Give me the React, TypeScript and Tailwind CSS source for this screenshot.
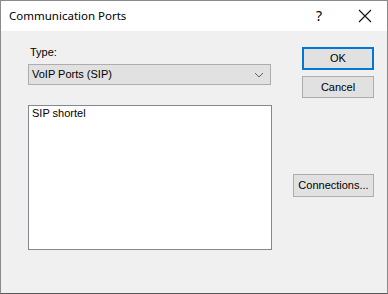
export default function App() {
  return (
    <div className="w-[388px] h-[294px] bg-[#f0f0f0] border border-[#8a8a8a] border-b-[#5a5a5a] flex flex-col overflow-hidden">
      {/* title bar */}
      <div className="h-[30px] bg-white flex items-center shrink-0">
        <span className="ml-[8px] text-[11.5px] text-black font-['Noto_Sans',sans-serif] leading-none">
          Communication Ports
        </span>
        <span className="ml-auto mr-[35px] text-[14px] text-black font-['Noto_Sans',sans-serif] leading-none">?</span>
        <svg className="mr-[14px]" width="16" height="16" viewBox="0 0 16 16">
          <path d="M2 2 L14 14 M14 2 L2 14" stroke="#111" strokeWidth="1.1" fill="none" />
        </svg>
      </div>

      {/* body */}
      <div className="flex flex-1 font-['Liberation_Sans',Arial,sans-serif] text-[11px] text-black">
        <div className="ml-[27px] w-[243px] flex flex-col">
          <div className="mt-[15px] h-[13px] leading-[13px] pl-[2px]">Type:</div>
          <div className="mt-[5px] h-[21px] bg-[#e1e1e1] border border-[#adadad] flex items-center pl-[3px] pr-[6px]">
            <span>VoIP Ports (SIP)</span>
            <svg className="ml-auto" width="10" height="6" viewBox="0 0 10 6">
              <path d="M1 1 L5 5 L9 1" stroke="#606060" strokeWidth="1" fill="none" />
            </svg>
          </div>
          <div className="mt-[20px] w-[244px] h-[145px] bg-white border border-[#828790] px-[3px] pt-[1px] leading-[13px]">
            SIP shortel
          </div>
        </div>

        <div className="flex-1 flex flex-col items-end pr-[13px]">
          <button className="mt-[16px] w-[72px] h-[23px] bg-[#e1e1e1] border-2 border-[#0078d7] flex items-center justify-center">
            OK
          </button>
          <button className="mt-[6px] w-[72px] h-[22px] bg-[#e1e1e1] border border-[#adadad] flex items-center justify-center">
            Cancel
          </button>
          <button className="mt-[76px] w-[81px] h-[23px] bg-[#e1e1e1] border border-[#adadad] flex items-center justify-center">
            Connections...
          </button>
        </div>
      </div>
    </div>
  );
}
